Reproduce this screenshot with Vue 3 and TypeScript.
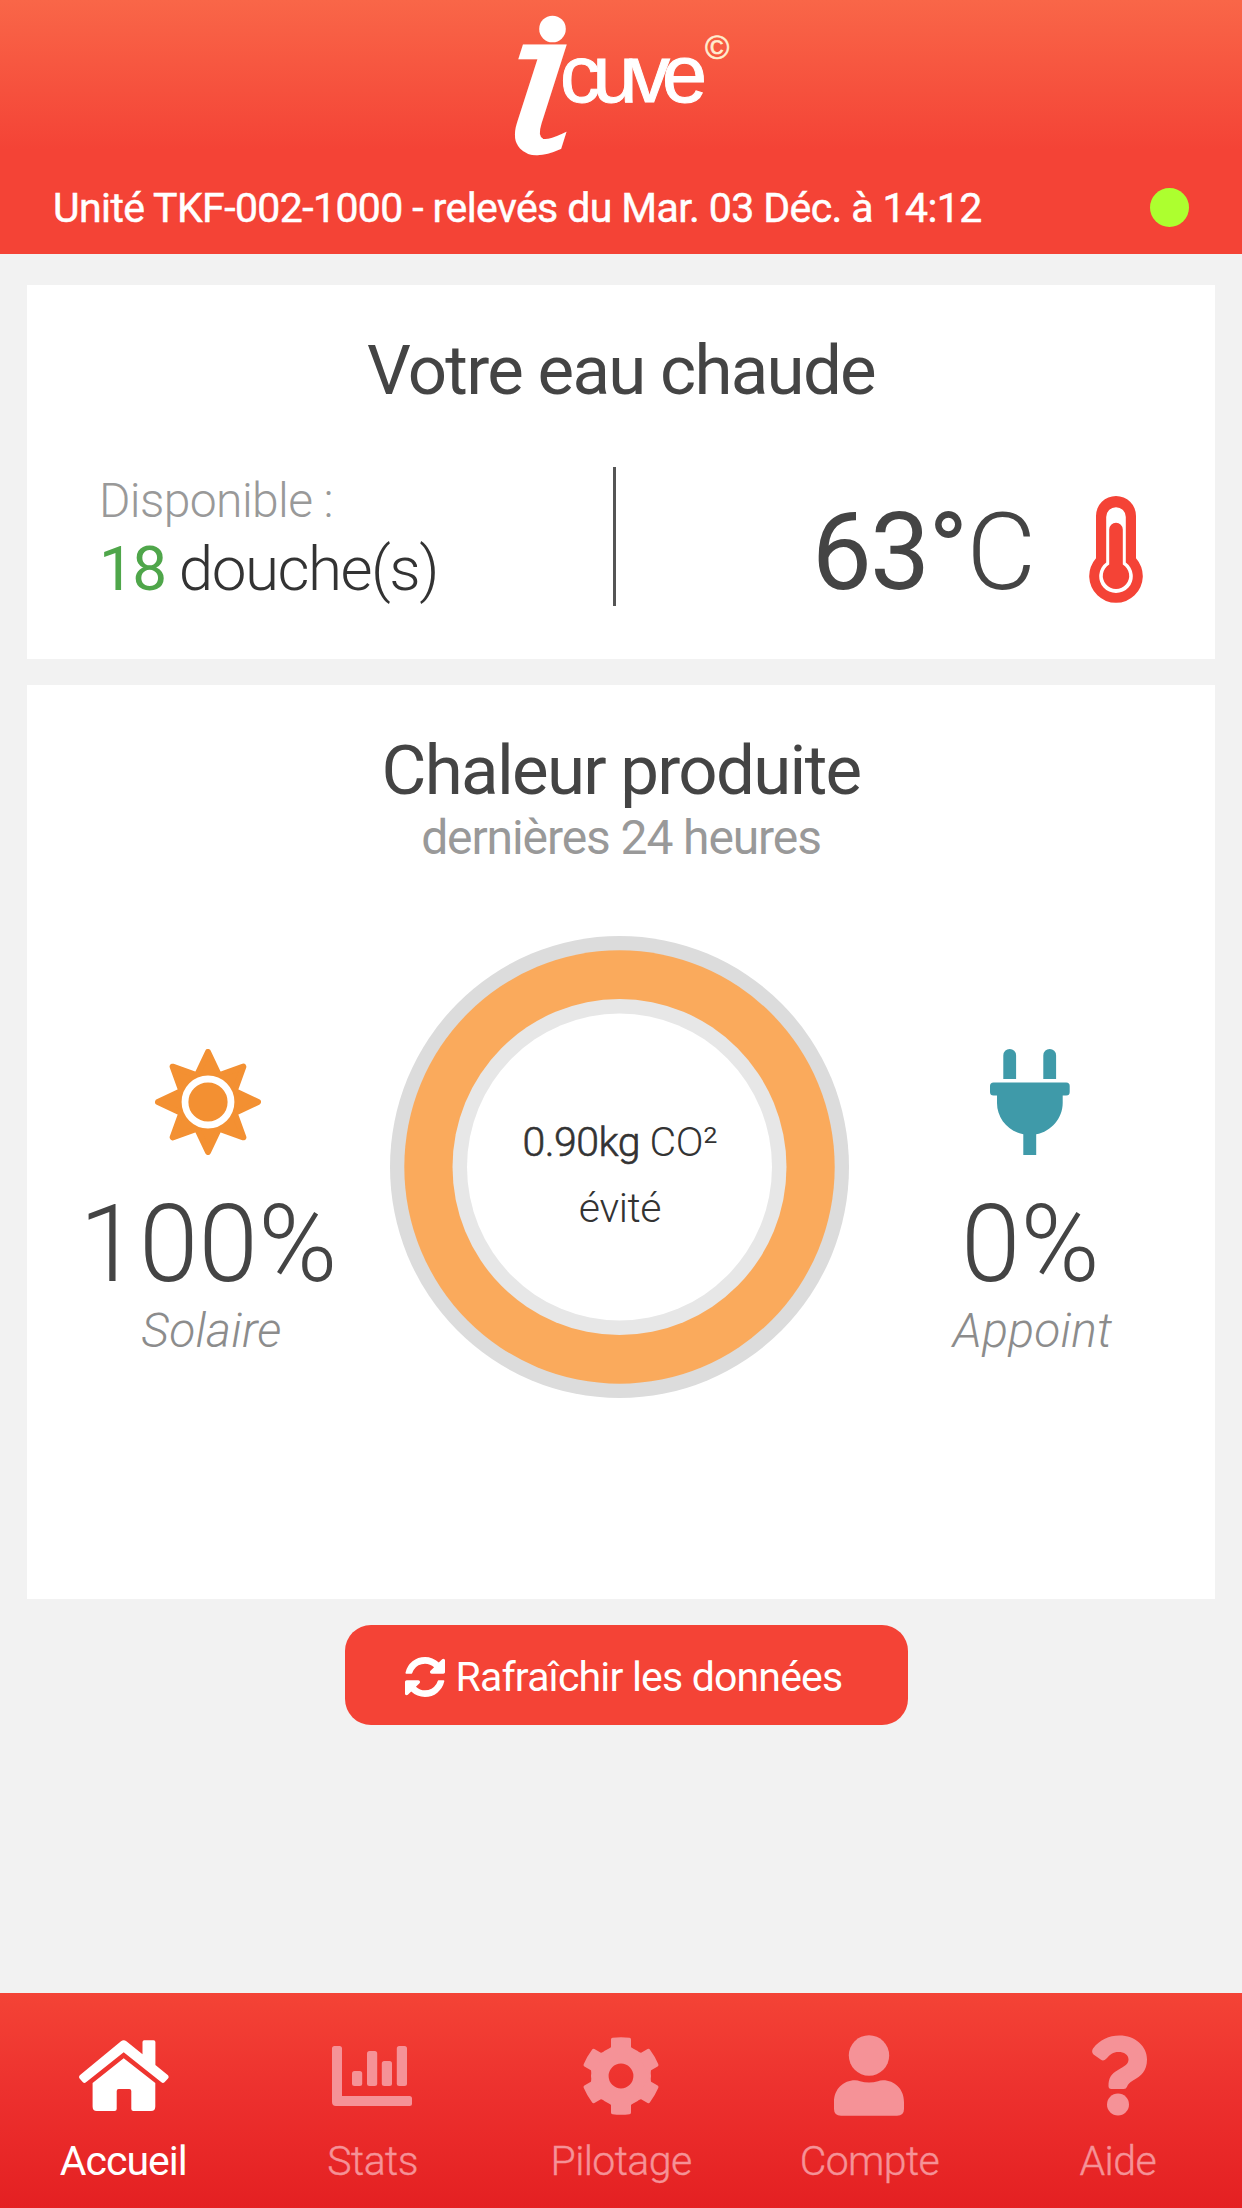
<script setup lang="ts">
interface Tab {
  id: string
  label: string
  active: boolean
}

const tabs: Tab[] = [
  { id: 'home', label: 'Accueil', active: true },
  { id: 'stats', label: 'Stats', active: false },
  { id: 'control', label: 'Pilotage', active: false },
  { id: 'account', label: 'Compte', active: false },
  { id: 'help', label: 'Aide', active: false },
]

const gearTeeth: number[] = [0, 60, 120, 180, 240, 300]

// Eight-pointed star outline, centred on the origin
const sunPoints: string = Array.from({ length: 16 }, (_, i) => {
  const r = i % 2 === 0 ? 50 : 28.8
  const a = (i * Math.PI) / 8
  return `${(r * Math.sin(a)).toFixed(2)},${(-r * Math.cos(a)).toFixed(2)}`
}).join(' ')
</script>

<template>
  <div class="app">
    <header class="header">
      <svg class="logo" viewBox="0 0 260 170" aria-label="icuve">
        <circle cx="62.500" cy="29" r="13.300" />
        <text class="logo-i" transform="translate(4 151.500) skewX(-6) scale(1.1 1)">ι</text>
        <text class="logo-name" x="70" y="102">cuve</text>
        <text class="logo-copy" x="215" y="58.500">©</text>
      </svg>
      <div class="status">
        <span class="unit">Unité TKF-002-1000 - relevés du Mar. 03 Déc. à 14:12</span>
        <span class="dot"></span>
      </div>
    </header>

    <main class="content">
      <section class="card water">
        <h1 class="title">Votre eau chaude</h1>
        <div class="water-row">
          <div class="showers">
            <span class="avail">Disponible :</span>
            <span class="count"><b>18</b><span>douche(s)</span></span>
          </div>
          <div class="divider"></div>
          <div class="temp">
            <span class="degrees">63°<i>C</i></span>
            <svg class="thermo" viewBox="0 0 54 107">
              <path fill="#f44336" d="M7 20a20 20 0 0 1 40 0v42.200a26.800 26.800 0 1 1-40 0z" />
              <path fill="#fff" d="M17.200 21a9.800 9.800 0 0 1 19.600 0v45.600a16.800 16.800 0 1 1-19.600 0z" />
              <path fill="#f44336" d="M20.200 33.500a6.800 6.800 0 0 1 13.600 0v35a13.200 13.200 0 1 1-13.600 0z" />
            </svg>
          </div>
        </div>
      </section>

      <section class="card heat">
        <h1 class="title">Chaleur produite</h1>
        <p class="sub">dernières 24 heures</p>
        <div class="heat-row">
          <div class="source">
            <svg class="sun" viewBox="-53 -53 106 106">
              <polygon :points="sunPoints" fill="#f39032" stroke="#f39032" stroke-width="6" stroke-linejoin="round" />
              <circle r="23" fill="none" stroke="#fff" stroke-width="6.800" />
            </svg>
            <span class="percent">100%</span>
            <span class="source-name solar">Solaire</span>
          </div>
          <div class="ring">
            <svg class="ring-art" viewBox="0 0 459 462">
              <ellipse cx="229.500" cy="231" rx="229.500" ry="231" fill="#dcdcdc" />
              <ellipse cx="229.500" cy="231" rx="215.200" ry="216.700" fill="#faaa5c" />
              <ellipse cx="229.500" cy="231" rx="167" ry="168" fill="#e7e7e7" />
              <ellipse cx="229.500" cy="231" rx="152.500" ry="153.500" fill="#fff" />
            </svg>
            <div class="ring-text">
              <span class="mass"><b>0.90kg</b> CO²</span>
              <span>évité</span>
            </div>
          </div>
          <div class="source">
            <svg class="plug" viewBox="0 0 80 106" fill="#3f9aa9">
              <path d="M13.300 30V6.400a6.400 6.400 0 0 1 12.800 0V30zM53.300 30V6.400a6.400 6.400 0 0 1 12.800 0V30z" />
              <rect x="0" y="33.400" width="79.700" height="13" rx="3.500" />
              <path d="M7 45v9c0 15 11 28.500 26.300 31.300V106h12.900V85.300C61.500 82.500 72.700 69 72.700 54v-9z" />
            </svg>
            <span class="percent">0%</span>
            <span class="source-name aux">Appoint</span>
          </div>
        </div>
      </section>

      <button class="refresh" type="button">
        <svg class="refresh-icon" viewBox="0 0 1536 1536" fill="#fff">
          <path d="M1511 928q0 5-1 7-64 268-268 434.500t-478 166.500q-146 0-282.500-55t-243.500-157l-129 129q-19 19-45 19t-45-19-19-45v-448q0-26 19-45t45-19h448q26 0 45 19t19 45-19 45l-137 137q71 66 161 102t187 36q134 0 250-65t186-179q11-17 53-117 8-23 30-23h192q13 0 22.500 9.500t9.500 22.500zm25-800v448q0 26-19 45t-45 19h-448q-26 0-45-19t-19-45 19-45l138-138q-148-137-349-137-134 0-250 65t-186 179q-11 17-53 117-8 23-30 23h-199q-13 0-22.500-9.500t-9.500-22.500v-7q65-268 270-434.500t480-166.500q146 0 284 55.500t245 156.500l130-129q19-19 45-19t45 19 19 45z" />
        </svg>
        <span>Rafraîchir les données</span>
      </button>
    </main>

    <nav class="tabs">
      <a v-for="tab in tabs" :key="tab.id" class="tab" :class="[tab.id, { active: tab.active }]">
        <span class="tab-icon">
          <svg v-if="tab.id === 'home'" width="90" height="71" viewBox="0 0 90 71">
            <path d="M42 1.200Q44.700-.8 47.400 1.200L63.500 14.200V2Q63.500.3 65.300.3H74.600Q76.400.3 76.400 2V25L89 35.200Q90.300 37 89 38.500L85.500 42.300Q84 43.600 82.400 42.300L44.700 12.300L7 42.300Q5.400 43.600 3.900 42.300L.6 38.500Q-.6 37 .8 35.200Z" />
            <path d="M44.700 18.200L76.300 43V66.500Q76.300 71 72 71H54.500Q52.300 71 52.300 69V51Q52.300 49 50.300 49H39.700Q37.700 49 37.700 51V69Q37.700 71 35.500 71H17.800Q13.600 71 13.600 66.500V43Z" />
          </svg>
          <svg v-else-if="tab.id === 'stats'" width="81" height="60" viewBox="0 0 81 60">
            <path d="M2.500 0h5q2.500 0 2.500 2.500V50h67.500q2.500 0 2.500 2.500v5q0 2.500-2.500 2.500H4q-4 0-4-4V2.500Q0 0 2.500 0z" />
            <rect x="20" y="25" width="10.200" height="15" rx="2.500" />
            <rect x="35" y="5" width="10.200" height="35" rx="2.500" />
            <rect x="49.800" y="15" width="10.200" height="25" rx="2.500" />
            <rect x="64.800" y="0" width="10.200" height="40" rx="2.500" />
          </svg>
          <svg v-else-if="tab.id === 'control'" width="78" height="78" viewBox="-39 -39 78 78">
            <circle r="21.200" fill="none" stroke="currentColor" stroke-width="17.600" />
            <path v-for="angle in gearTeeth" :key="angle" :transform="`rotate(${angle})`" d="M-13.500-25L-10-29V-36.500Q-10-38 -8.500-38.200Q0-39.200 8.500-38.200Q10-38 10-36.500V-29L13.500-25Z" />
          </svg>
          <svg v-else-if="tab.id === 'account'" width="70" height="81" viewBox="0 0 70 81">
            <circle cx="35" cy="20.500" r="20.200" />
            <path d="M0 67C0 54 9.500 45.300 21 45.300Q24 45.300 26 46.200Q35 49 44 46.200Q46 45.300 49 45.300C60.500 45.300 70 54 70 67V74Q70 80.700 63 80.700H7Q0 80.700 0 74Z" />
          </svg>
          <svg v-else width="55" height="81" viewBox="0 0 55 81">
            <path d="M1 13.500C8 4.500 17 .5 27.500.5C43 .5 55 11 55 24.500C55 36 49 41 41 45.500C37.500 47.600 36 49 35 51.800Q34.200 54 31.800 54H19.200Q16.500 54 16.500 51C16.500 43 19 39 26 35C33 31 36.500 29 36.500 24.500C36.500 19.500 32 17 26.500 17C21 17 18 19.500 14.500 23.600Q11.500 26.800 9 24.800L1.500 19.500Q-1 17 1 13.500Z" />
            <circle cx="26" cy="69.500" r="11" />
          </svg>
        </span>
        <span class="tab-label">{{ tab.label }}</span>
      </a>
    </nav>
  </div>
</template>

<style>
html,
body {
  margin: 0;
  background: #f2f2f2;
}
</style>

<style scoped>
.app {
  display: flex;
  flex-direction: column;
  width: 1242px;
  height: 2208px;
  overflow: hidden;
  background: #f2f2f2;
  color: #444;
  font-family: Roboto, "Liberation Sans", sans-serif;
  white-space: nowrap;
}
.header {
  display: flex;
  flex-direction: column;
  height: 254px;
  background: linear-gradient(#f96648 0, #f44336 150px, #f44336 100%);
  color: #fff;
}
.logo {
  display: block;
  width: 260px;
  height: 170px;
  margin-left: 490px;
  overflow: visible;
  fill: #fff;
}
.logo-i {
  font: italic 203px "DejaVu Serif", serif;
  stroke: #fff;
  stroke-width: 4px;
}
.logo-name {
  font: 81px "Liberation Sans", sans-serif;
  letter-spacing: -8px;
  stroke: #fff;
  stroke-width: 1px;
}
.logo-copy {
  font: 33px "Liberation Sans", sans-serif;
  fill: #ffeed0;
  stroke: #ffeed0;
  stroke-width: 0.6px;
}
.status {
  display: flex;
  align-items: center;
  justify-content: space-between;
  height: 48px;
  margin-top: 13px;
  padding: 0 53px 0 52px;
  font-size: 41px;
  line-height: 48px;
}
.unit {
  padding: 1px 0 0 1px;
  font-weight: 400;
  letter-spacing: -0.6px;
  -webkit-text-stroke: 0.5px #fff;
}
.dot {
  width: 39px;
  height: 39px;
  border-radius: 50%;
  background: #adff2f;
}
.content {
  display: flex;
  flex-direction: column;
  flex: 1;
  padding: 31px 27px 0;
}
.card {
  box-sizing: border-box;
  background: #fff;
  padding-top: 47px;
}
.water {
  height: 374px;
}
.heat {
  height: 914px;
  margin-top: 26px;
}
.title {
  margin: 0;
  font-size: 69px;
  font-weight: 400;
  line-height: 78px;
  letter-spacing: -1.7px;
  text-align: center;
}
.water-row {
  display: flex;
  height: 139px;
  margin-top: 57px;
}
.showers {
  box-sizing: border-box;
  display: flex;
  flex-direction: column;
  gap: 5px;
  width: 586px;
  padding: 6px 0 0 72px;
}
.avail {
  color: #999;
  font-size: 48px;
  font-weight: 300;
  line-height: 56px;
  letter-spacing: -0.6px;
}
.count {
  display: flex;
  gap: 13px;
  color: #333;
  font-size: 62px;
  font-weight: 300;
  line-height: 70px;
  letter-spacing: -1.5px;
}
.count b {
  color: #4fa64a;
  font-weight: 400;
}
.divider {
  width: 3px;
  background: #555;
}
.temp {
  box-sizing: border-box;
  display: flex;
  flex: 1;
  justify-content: flex-end;
  gap: 53px;
  padding: 25px 72px 0 0;
}
.degrees {
  margin-top: 1px;
  font-size: 107px;
  line-height: 120px;
  letter-spacing: -1.8px;
}
.degrees i {
  font-style: normal;
  font-weight: 300;
  letter-spacing: 0;
}
.thermo {
  width: 54px;
  height: 107px;
  margin-top: 4px;
}
.sub {
  margin: 0;
  color: #999;
  font-size: 48px;
  font-weight: 400;
  line-height: 56px;
  letter-spacing: -1.1px;
  text-align: center;
}
.heat-row {
  display: grid;
  grid-template-columns: 363px 459px 363px;
  margin-top: 70px;
}
.source {
  display: flex;
  flex-direction: column;
  align-items: center;
  padding-top: 113px;
}
.sun,
.plug {
  margin-right: 1px;
}
.sun {
  width: 106px;
  height: 106px;
}
.plug {
  width: 80px;
  height: 106px;
}
.percent {
  margin-top: 32px;
  font-size: 107px;
  font-weight: 300;
  line-height: 116px;
  letter-spacing: 0.3px;
}
.source-name {
  color: #8c8c8c;
  font-size: 48px;
  font-style: italic;
  font-weight: 300;
  line-height: 56px;
  letter-spacing: 0.2px;
}
.solar {
  padding-left: 6px;
}
.aux {
  padding-left: 4px;
}
.ring {
  display: grid;
  height: 462px;
}
.ring-art {
  grid-area: 1 / 1;
  width: 459px;
  height: 462px;
}
.ring-text {
  grid-area: 1 / 1;
  display: flex;
  flex-direction: column;
  align-items: center;
  padding: 173px 0 0 1px;
  color: #333;
  font-size: 41px;
  font-weight: 300;
  line-height: 66px;
  letter-spacing: -0.4px;
}
.ring-text b {
  font-weight: 300;
  letter-spacing: -0.5px;
  -webkit-text-stroke: 0.6px #333;
}
.refresh {
  display: flex;
  align-items: center;
  gap: 11px;
  width: 563px;
  height: 100px;
  margin: 26px 0 0 317.500px;
  padding: 4px 0 0 60px;
  border: 0;
  border-radius: 26px;
  background: #f44336;
  color: #fff;
  font-family: inherit;
  font-size: 41px;
  font-weight: 400;
  letter-spacing: -0.82px;
}
.refresh-icon {
  width: 40px;
  height: 40px;
  margin-bottom: 1px;
}
.tabs {
  display: grid;
  grid-template-columns: repeat(5, 1fr);
  height: 215px;
  background: linear-gradient(#f44336 0, #ec2f2d 50%, #e42022 100%);
}
.tab {
  display: flex;
  flex-direction: column;
  align-items: center;
  color: #f59297;
}
.tab.active {
  color: #fff;
}
.tab-icon {
  display: flex;
  align-items: center;
  height: 81px;
  margin-top: 42px;
}
.tab-icon svg {
  display: block;
  fill: currentColor;
}
.tab-label {
  margin-top: 21px;
  font-size: 41px;
  font-weight: 300;
  line-height: 48px;
  letter-spacing: -0.6px;
  -webkit-text-stroke: 0.4px currentColor;
}
.tab.active .tab-label {
  padding-right: 2px;
  font-weight: 400;
  letter-spacing: -1px;
  -webkit-text-stroke: 0;
}
.help .tab-icon {
  padding-left: 3px;
}
</style>
